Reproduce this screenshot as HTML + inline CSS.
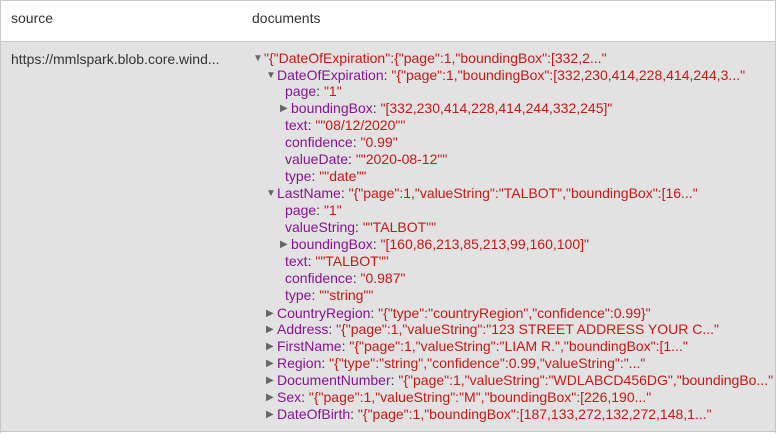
<!DOCTYPE html>
<html><head><style>
body{margin:0;width:776px;height:435px;background:#fff;font-family:"Liberation Sans",sans-serif;font-size:14px;overflow:hidden}
.wrap{position:absolute;left:0;top:0;width:774px;height:432px;border:1px solid #c8c8c8;border-bottom:none}
.hdr{position:absolute;top:0;left:0;right:0;height:40px;background:#fff;border-bottom:1px solid #c8c8c8;color:#333}
.hdr span{position:absolute;top:9px}
.body{position:absolute;top:41px;left:0;right:0;height:389px;background:#e2e2e2;border-bottom:1px solid #c8c8c8}
.src{position:absolute;left:10px;top:9px;color:#333}
.l{position:absolute;white-space:nowrap;height:17px;line-height:17px}
.k{color:#881391}.v{color:#c41a16}.c{color:#333}
.t{color:#666;font-size:10px;display:inline-block;width:11px;vertical-align:top}
</style></head><body><div class="wrap">
<div class="hdr"><span style="left:10px">source</span><span style="left:251px">documents</span></div>
<div class="body">
<div class="src">https://mmlspark.blob.core.wind...</div>
</div>
</div>
<div id="tree" style="position:absolute;left:0;top:0">
<div class="l" style="left:253px;top:50px"><span class="t">▼</span><span class="v">"{"DateOfExpiration":{"page":1,"boundingBox":[332,2..."</span></div>
<div class="l" style="left:266px;top:67px"><span class="t">▼</span><span class="k">DateOfExpiration</span><span class="c">: </span><span class="v">"{"page":1,"boundingBox":[332,230,414,228,414,244,3..."</span></div>
<div class="l" style="left:285px;top:83px"><span class="k">page</span><span class="c">: </span><span class="v">"1"</span></div>
<div class="l" style="left:280px;top:100px"><span class="t">▶</span><span class="k">boundingBox</span><span class="c">: </span><span class="v">"[332,230,414,228,414,244,332,245]"</span></div>
<div class="l" style="left:285px;top:117px"><span class="k">text</span><span class="c">: </span><span class="v">""08/12/2020""</span></div>
<div class="l" style="left:285px;top:134px"><span class="k">confidence</span><span class="c">: </span><span class="v">"0.99"</span></div>
<div class="l" style="left:285px;top:151px"><span class="k">valueDate</span><span class="c">: </span><span class="v">""2020-08-12""</span></div>
<div class="l" style="left:285px;top:168px"><span class="k">type</span><span class="c">: </span><span class="v">""date""</span></div>
<div class="l" style="left:266px;top:185px"><span class="t">▼</span><span class="k">LastName</span><span class="c">: </span><span class="v">"{"page":1,"valueString":"TALBOT","boundingBox":[16..."</span></div>
<div class="l" style="left:285px;top:202px"><span class="k">page</span><span class="c">: </span><span class="v">"1"</span></div>
<div class="l" style="left:285px;top:219px"><span class="k">valueString</span><span class="c">: </span><span class="v">""TALBOT""</span></div>
<div class="l" style="left:280px;top:236px"><span class="t">▶</span><span class="k">boundingBox</span><span class="c">: </span><span class="v">"[160,86,213,85,213,99,160,100]"</span></div>
<div class="l" style="left:285px;top:253px"><span class="k">text</span><span class="c">: </span><span class="v">""TALBOT""</span></div>
<div class="l" style="left:285px;top:270px"><span class="k">confidence</span><span class="c">: </span><span class="v">"0.987"</span></div>
<div class="l" style="left:285px;top:287px"><span class="k">type</span><span class="c">: </span><span class="v">""string""</span></div>
<div class="l" style="left:266px;top:305px"><span class="t">▶</span><span class="k">CountryRegion</span><span class="c">: </span><span class="v">"{"type":"countryRegion","confidence":0.99}"</span></div>
<div class="l" style="left:266px;top:321px"><span class="t">▶</span><span class="k">Address</span><span class="c">: </span><span class="v">"{"page":1,"valueString":"123 STREET ADDRESS YOUR C..."</span></div>
<div class="l" style="left:266px;top:338px"><span class="t">▶</span><span class="k">FirstName</span><span class="c">: </span><span class="v">"{"page":1,"valueString":"LIAM R.","boundingBox":[1..."</span></div>
<div class="l" style="left:266px;top:355px"><span class="t">▶</span><span class="k">Region</span><span class="c">: </span><span class="v">"{"type":"string","confidence":0.99,"valueString":"..."</span></div>
<div class="l" style="left:266px;top:372px"><span class="t">▶</span><span class="k">DocumentNumber</span><span class="c">: </span><span class="v">"{"page":1,"valueString":"WDLABCD456DG","boundingBo..."</span></div>
<div class="l" style="left:266px;top:389px"><span class="t">▶</span><span class="k">Sex</span><span class="c">: </span><span class="v">"{"page":1,"valueString":"M","boundingBox":[226,190..."</span></div>
<div class="l" style="left:266px;top:406px"><span class="t">▶</span><span class="k">DateOfBirth</span><span class="c">: </span><span class="v">"{"page":1,"boundingBox":[187,133,272,132,272,148,1..."</span></div>
</div>
</body></html>
